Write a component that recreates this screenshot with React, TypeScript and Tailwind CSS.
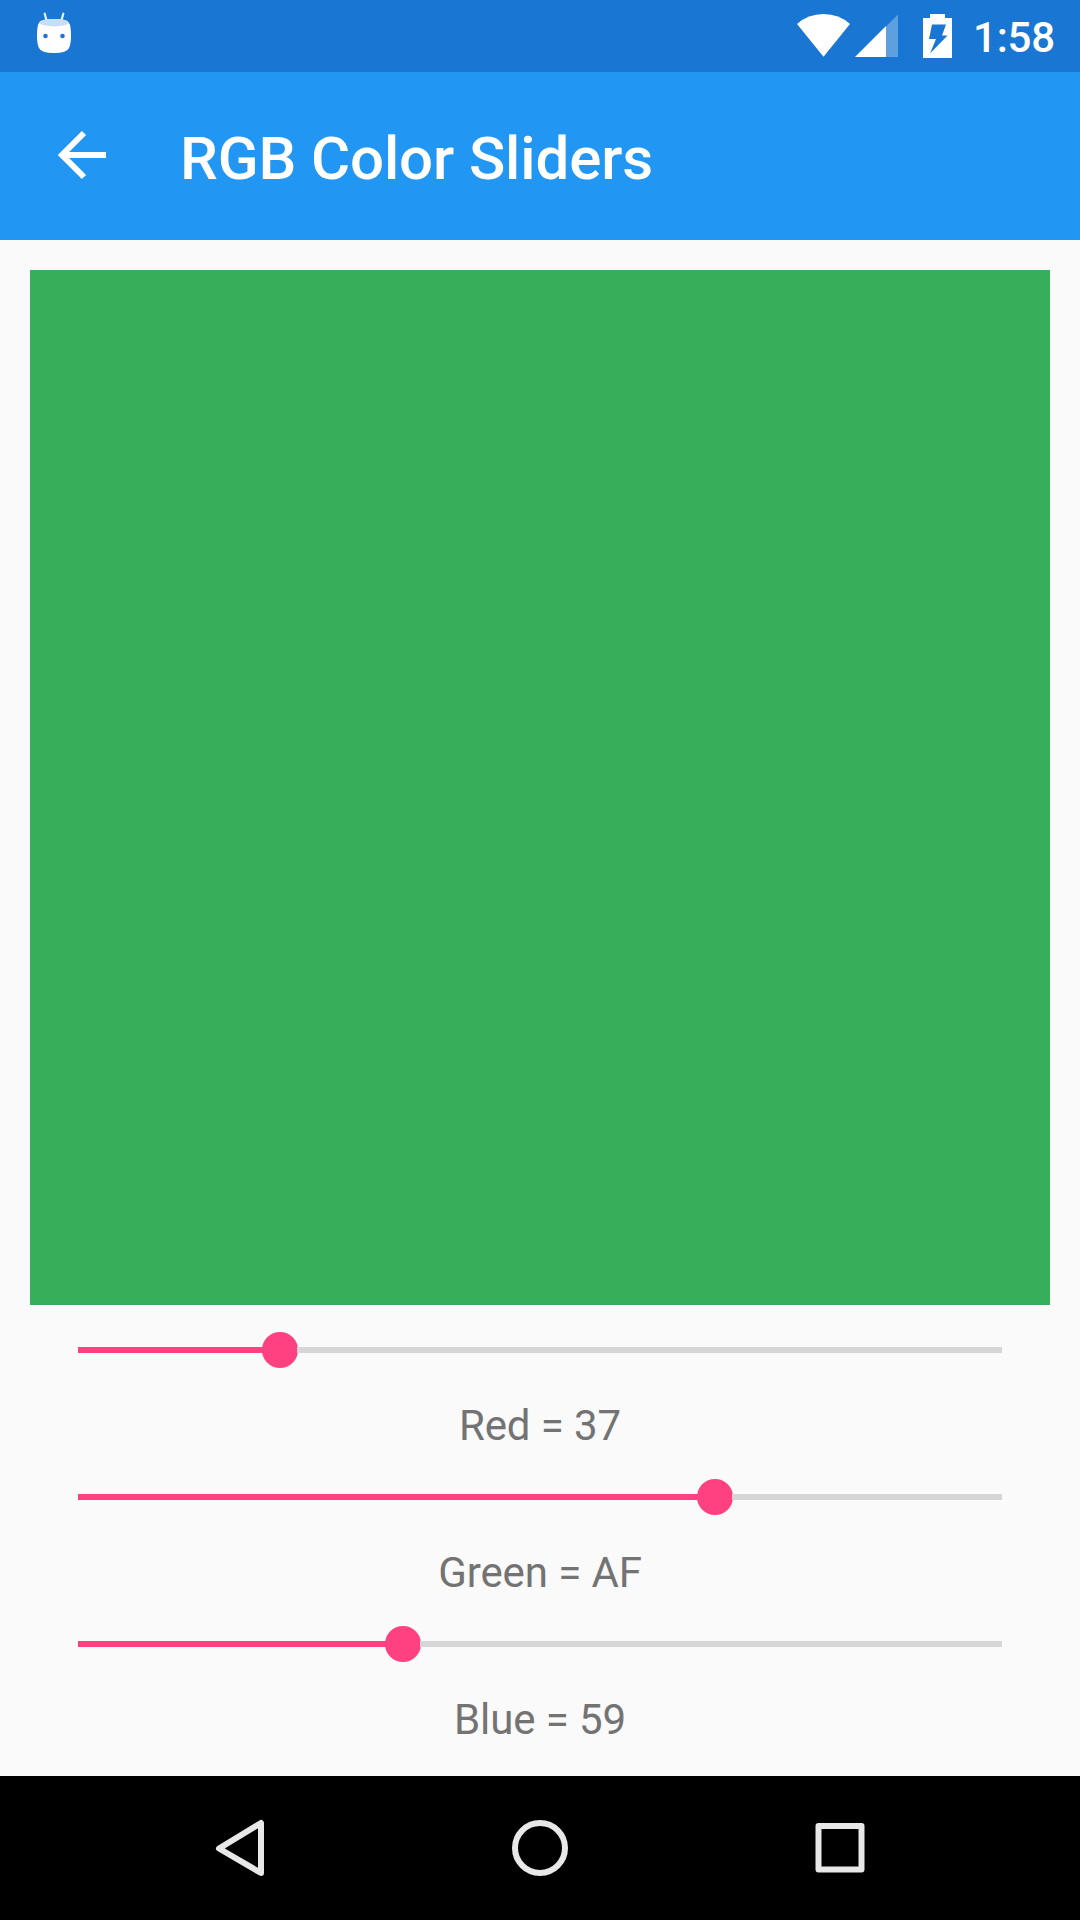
const sliders = [
  { label: 'Red = 37', pos: 202 },
  { label: 'Green = AF', pos: 637 },
  { label: 'Blue = 59', pos: 325 },
];

export default function App() {
  return (
    <div className="flex h-[1920px] w-[1080px] flex-col overflow-hidden bg-[#fafafa] font-['Roboto',sans-serif]">
      <header className="flex h-[72px] shrink-0 items-center bg-[#1976d2] text-white">
        <svg className="h-[72px] w-[108px]" viewBox="0 0 108 72" fill="none">
          <path d="M44.700 13.700l2.200 8M63.300 13.700l-2.200 8" stroke="#fff" strokeOpacity=".9" strokeWidth="2.200" strokeLinecap="round" />
          <path d="M39 23q1-4 15-4t15 4q2 2 2 13 0 8-2 12-2 5-15 5t-15-5q-2-4-2-12 0-11 2-13z" fill="#fff" />
          <ellipse cx="54" cy="22.700" rx="14.500" ry="3.700" fill="#c9def5" />
          <circle cx="45.500" cy="36" r="2.300" fill="#1976d2" />
          <circle cx="62.500" cy="36" r="2.300" fill="#1976d2" />
        </svg>
        <svg className="ml-auto h-[72px] w-[183px]" viewBox="790 0 183 72">
          <path d="M797 24Q808 14 823.500 14T850 24L823.500 56.700z" fill="#fff" />
          <path d="M898 14.500V57H886V26.500z" fill="#fff" fillOpacity=".3" />
          <path d="M886 26v31h-31z" fill="#fff" />
          <path d="M930 14h15v4h7v40h-29V18h7z" fill="#fff" />
          <path d="M932 24.500h14l-4 11h5.500l-17.500 18 6-14.500h-7z" fill="#1976d2" />
        </svg>
        <span className="w-[107px] pt-0.5 text-[42px] font-medium tracking-[-0.2px]">1:58</span>
      </header>
      <div className="flex h-[168px] shrink-0 items-center bg-[#2196f3] text-white">
        <svg className="h-[168px] w-[180px]" viewBox="0 72 180 168" fill="none" stroke="#fff" strokeWidth="6">
          <path d="M106 155H62M84 133l-22 22 22 22" />
        </svg>
        <h1 className="pt-1.5 text-[60px] font-medium tracking-[-0.12px]">RGB Color Sliders</h1>
      </div>
      <main className="flex flex-1 flex-col px-[30px] pt-[30px]">
        <div className="h-[1035px] shrink-0 bg-[#37ae59]" />
        {sliders.map((s) => (
          <div key={s.label} className="flex h-[147px] shrink-0 flex-col px-12">
            <div className="flex h-[90px] shrink-0 items-center">
              <div className="h-[6px] bg-[#ff4081]" style={{ width: s.pos - 17 }} />
              <div className="-ml-px size-9 rounded-full bg-[#ff4081]" />
              <div className="-ml-px h-[6px] flex-1 bg-[#d6d6d6]" />
            </div>
            <div className="h-[57px] text-center text-[42px] leading-[61px] tracking-[-0.1px] text-[#737373]">{s.label}</div>
          </div>
        ))}
      </main>
      <nav className="flex h-[144px] shrink-0 items-center justify-between bg-black px-[204px]">
        <svg className="size-[72px]" viewBox="204 1812 72 72" fill="none" stroke="#e8e8e8" strokeWidth="6" strokeLinejoin="round">
          <path d="M261 1823v50l-42-24.500z" />
        </svg>
        <svg className="size-[72px]" viewBox="504 1812 72 72" fill="none" stroke="#e8e8e8" strokeWidth="6">
          <circle cx="540" cy="1848" r="25" />
        </svg>
        <svg className="size-[72px]" viewBox="804 1812 72 72" fill="none" stroke="#e8e8e8" strokeWidth="6" strokeLinejoin="round">
          <rect x="818.500" y="1826" width="43" height="43.500" />
        </svg>
      </nav>
    </div>
  );
}
